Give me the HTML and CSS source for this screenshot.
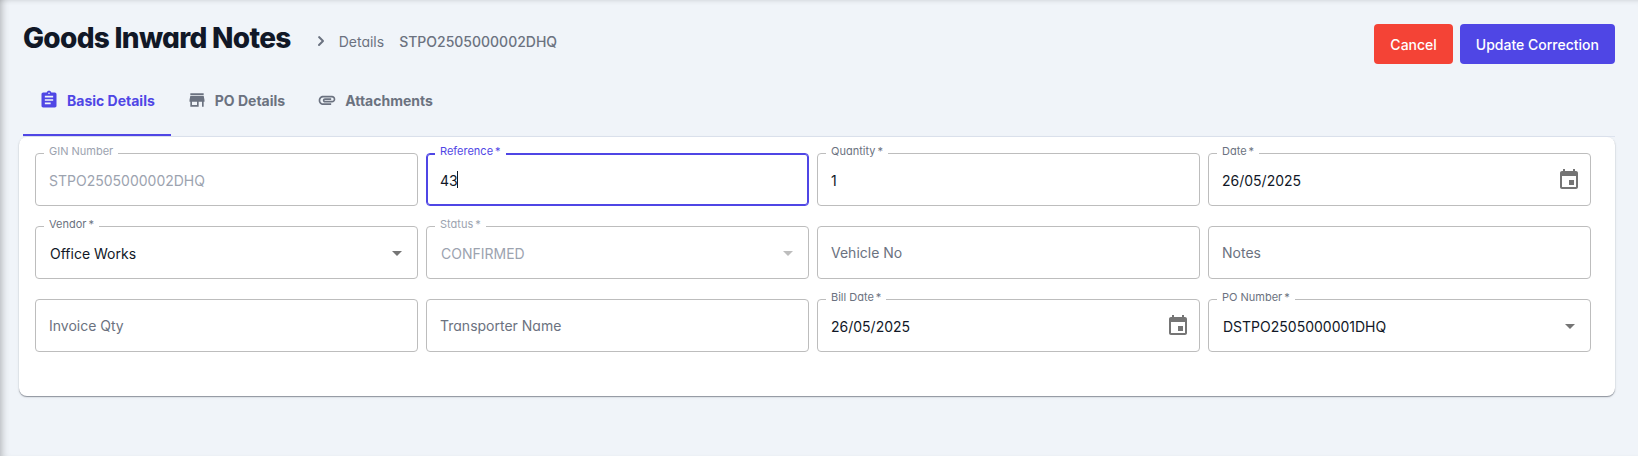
FILE: index.html
```html
<!DOCTYPE html>
<html lang="en">
<head>
    <meta charset="UTF-8">
    <meta name="viewport" content="width=device-width, initial-scale=1.0">
    <title>Goods Inward Notes</title>
    <link rel="stylesheet" href="styles.css">
</head>
<body>
    <main class="page">
        <header class="page-header">
            <h1 class="page-title">Goods Inward Notes</h1>
            <nav class="breadcrumb" aria-label="Breadcrumb">
                <svg class="breadcrumb-arrow" viewBox="0 0 20 20" aria-hidden="true"><path d="M7.3 14.7a1 1 0 0 1 0-1.4L10.6 10 7.3 6.7a1 1 0 0 1 1.4-1.4l4 4a1 1 0 0 1 0 1.4l-4 4a1 1 0 0 1-1.4 0z"/></svg>
                <a class="crumb" href="#">Details</a>
                <span class="crumb crumb-current">STPO2505000002DHQ</span>
            </nav>
            <div class="actions">
                <button class="btn btn-cancel" type="button">Cancel</button>
                <button class="btn btn-update" type="submit" form="gin-form">Update Correction</button>
            </div>
        </header>

        <div class="tabs" role="tablist">
            <button class="tab tab-active" type="button" role="tab" aria-selected="true">
                <svg class="tab-icon" viewBox="0 0 24 24" aria-hidden="true"><path d="M19 3h-4.18C14.4 1.84 13.3 1 12 1c-1.3 0-2.4.84-2.82 2H5c-1.1 0-2 .9-2 2v14c0 1.1.9 2 2 2h14c1.1 0 2-.9 2-2V5c0-1.1-.9-2-2-2zm-7 0c.55 0 1 .45 1 1s-.45 1-1 1-1-.45-1-1 .45-1 1-1zm2 14H7v-2h7v2zm3-4H7v-2h10v2zm0-4H7V7h10v2z"/></svg>
                Basic Details
            </button>
            <button class="tab" type="button" role="tab" aria-selected="false">
                <svg class="tab-icon" viewBox="0 0 24 24" aria-hidden="true"><path d="M20 4H4v2h16V4zm1 10v-2l-1-5H4l-1 5v2h1v6h10v-6h4v6h2v-6h1zm-9 4H6v-4h6v4z"/></svg>
                PO Details
            </button>
            <button class="tab" type="button" role="tab" aria-selected="false">
                <svg class="tab-icon" viewBox="0 0 24 24" aria-hidden="true"><path d="M2 12.5C2 9.46 4.46 7 7.5 7H18c2.21 0 4 1.79 4 4s-1.79 4-4 4H9.5C8.12 15 7 13.88 7 12.5S8.12 10 9.5 10H17v2H9.41c-.55 0-.55 1 0 1H18c1.1 0 2-.9 2-2s-.9-2-2-2H7.5C5.57 9 4 10.57 4 12.5S5.57 16 7.5 16H17v2H7.5C4.46 18 2 15.54 2 12.5z"/></svg>
                Attachments
            </button>
        </div>

        <form class="card" id="gin-form">
            <div class="field">
                <label class="field-label is-disabled" for="gin-number">GIN Number</label>
                <input class="control" id="gin-number" type="text" value="STPO2505000002DHQ" disabled>
            </div>
            <div class="field is-focused">
                <label class="field-label" for="reference">Reference&thinsp;*</label>
                <input class="control" id="reference" type="text" value="43">
                <span class="caret"></span>
            </div>
            <div class="field">
                <label class="field-label" for="quantity">Quantity&thinsp;*</label>
                <input class="control" id="quantity" type="text" value="1">
            </div>
            <div class="field">
                <label class="field-label" for="date">Date&thinsp;*</label>
                <input class="control" id="date" type="text" value="26/05/2025">
                <button class="date-button" type="button" aria-label="Choose date">
                    <svg class="date-icon" viewBox="0 0 24 24" aria-hidden="true"><path d="M17 12h-5v5h5v-5zM16 1v2H8V1H6v2H5c-1.11 0-1.99.9-1.99 2L3 19c0 1.1.89 2 2 2h14c1.1 0 2-.9 2-2V5c0-1.1-.9-2-2-2h-1V1h-2zm3 18H5V8h14v11z"/></svg>
                </button>
            </div>

            <div class="field">
                <label class="field-label" for="vendor">Vendor&thinsp;*</label>
                <select class="control control-select" id="vendor">
                    <option>Office Works</option>
                </select>
                <svg class="select-arrow" viewBox="0 0 24 24" aria-hidden="true"><path d="M7 10l5 5 5-5z"/></svg>
            </div>
            <div class="field">
                <label class="field-label is-disabled" for="status">Status&thinsp;*</label>
                <select class="control control-select" id="status" disabled>
                    <option>CONFIRMED</option>
                </select>
                <svg class="select-arrow is-disabled" viewBox="0 0 24 24" aria-hidden="true"><path d="M7 10l5 5 5-5z"/></svg>
            </div>
            <div class="field">
                <input class="control" type="text" placeholder="Vehicle No" aria-label="Vehicle No">
            </div>
            <div class="field">
                <input class="control" type="text" placeholder="Notes" aria-label="Notes">
            </div>

            <div class="field">
                <input class="control" type="text" placeholder="Invoice Qty" aria-label="Invoice Qty">
            </div>
            <div class="field">
                <input class="control" type="text" placeholder="Transporter Name" aria-label="Transporter Name">
            </div>
            <div class="field">
                <label class="field-label" for="bill-date">Bill Date&thinsp;*</label>
                <input class="control" id="bill-date" type="text" value="26/05/2025">
                <button class="date-button" type="button" aria-label="Choose bill date">
                    <svg class="date-icon" viewBox="0 0 24 24" aria-hidden="true"><path d="M17 12h-5v5h5v-5zM16 1v2H8V1H6v2H5c-1.11 0-1.99.9-1.99 2L3 19c0 1.1.89 2 2 2h14c1.1 0 2-.9 2-2V5c0-1.1-.9-2-2-2h-1V1h-2zm3 18H5V8h14v11z"/></svg>
                </button>
            </div>
            <div class="field">
                <label class="field-label" for="po-number">PO Number&thinsp;*</label>
                <select class="control control-select" id="po-number">
                    <option>DSTPO2505000001DHQ</option>
                </select>
                <svg class="select-arrow" viewBox="0 0 24 24" aria-hidden="true"><path d="M7 10l5 5 5-5z"/></svg>
            </div>
        </form>
    </main>
</body>
</html>
```
FILE: styles.css
```css
* {
    box-sizing: border-box;
}

body {
    margin: 0;
    min-height: 100vh;
    background-color: #f0f4f9;
    color: #111827;
    font-family: Inter, "Liberation Sans", sans-serif;
    font-size: 14px;
    font-feature-settings: "cv11";
    box-shadow: inset 8px 0 8px -7px rgba(0, 0, 0, 0.3), inset 0 5px 5px -4px rgba(0, 0, 0, 0.1);
}

button,
input,
select {
    font: inherit;
}

input,
select {
    font-feature-settings: inherit;
}

.page {
    padding: 24px 23px 0 19px;
}

.page-header {
    display: flex;
    align-items: flex-start;
    padding-left: 4px;
}

.page-title {
    margin: 0;
    font-size: 28px;
    line-height: 28px;
    font-weight: 800;
    letter-spacing: -0.025em;
}

.breadcrumb {
    display: flex;
    align-items: center;
    height: 34px;
    margin-left: 20px;
    color: #6b7280;
}

.breadcrumb-arrow {
    width: 20px;
    height: 20px;
    margin-right: 8px;
    fill: currentColor;
}

.crumb {
    margin-right: 15px;
    color: inherit;
    text-decoration: none;
}

.crumb-current {
    font-weight: 500;
}

.actions {
    display: flex;
    gap: 7px;
    margin-left: auto;
}

.btn {
    height: 40px;
    padding: 0 16px;
    border: 0;
    border-radius: 4px;
    color: #ffffff;
    font-weight: 500;
    font-feature-settings: normal;
    cursor: pointer;
}

.btn-cancel {
    background-color: #f44336;
}

.btn-update {
    background-color: #4f46e5;
}

.tabs {
    display: flex;
    height: 73px;
    margin-left: 4px;
    border-bottom: 1px solid #dde3ee;
}

.tab {
    display: flex;
    align-items: center;
    gap: 8px;
    padding: 2px 16px 0;
    border: 0;
    border-bottom: 2px solid transparent;
    background: none;
    color: #6b7280;
    font-weight: 700;
    font-feature-settings: normal;
    cursor: pointer;
}

.tab-active {
    border-bottom-color: #4f46e5;
    color: #4f46e5;
}

.tab-icon {
    width: 20px;
    height: 20px;
    fill: currentColor;
}

.card {
    display: grid;
    grid-template-columns: repeat(4, 1fr);
    gap: 20px 8px;
    padding: 16px 24px 44px 16px;
    border-radius: 8px;
    background-color: #ffffff;
    box-shadow: 0 1px 1px #8f949e, 0 1px 3px rgba(0, 0, 0, 0.1);
}

.field {
    position: relative;
    display: flex;
    align-items: center;
    height: 53px;
    border: 1px solid #bdbdbd;
    border-radius: 4px;
}

.field.is-focused {
    border-color: #4f46e5;
    box-shadow: inset 0 0 0 1px #4f46e5;
}

/* label sits in a notch of the outline */
.field-label {
    position: absolute;
    top: -10px;
    left: 8px;
    padding: 0 5px;
    background-color: #ffffff;
    color: #6b7280;
    font-size: 11px;
    line-height: 14px;
}

.is-focused .field-label {
    color: #4f46e5;
}

.field-label.is-disabled {
    color: #9ca3af;
}

.control {
    flex: 1;
    min-width: 0;
    height: 100%;
    padding: 2px 13px 0;
    border: 0;
    outline: 0;
    background: none;
    color: #111827;
}

.control:placeholder-shown {
    padding-top: 0;
}

.control::placeholder {
    color: #6b7280;
    opacity: 1;
}

.control:disabled {
    color: #9ca3af;
    opacity: 1;
}

.control-select {
    padding: 2px 14px 0;
    appearance: none;
}

.caret {
    position: absolute;
    top: 17px;
    left: 30px;
    width: 1px;
    height: 17px;
    background-color: #111827;
}

.select-arrow {
    position: absolute;
    right: 8px;
    width: 24px;
    height: 24px;
    fill: #757575;
    pointer-events: none;
}

.select-arrow.is-disabled {
    fill: #bdbdbd;
}

.date-button {
    display: flex;
    margin-right: 9px;
    padding: 0;
    border: 0;
    background: none;
    cursor: pointer;
}

.date-icon {
    width: 24px;
    height: 24px;
    fill: #757575;
}
```
